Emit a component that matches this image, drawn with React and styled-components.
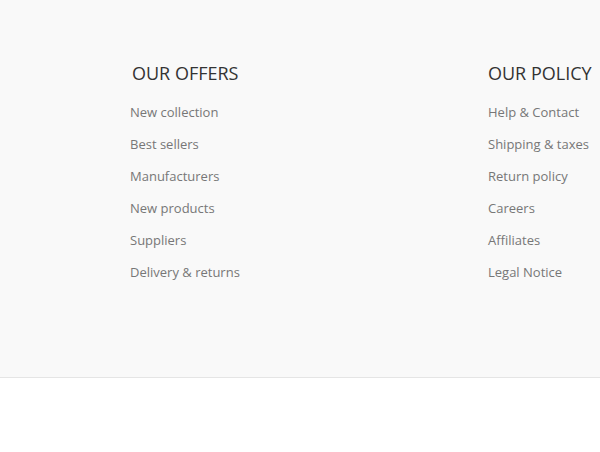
import React from "react";
import styled, { createGlobalStyle } from "styled-components";

const GlobalStyle = createGlobalStyle`
  html, body {
    margin: 0;
    padding: 0;
    background: #ffffff;
    font-family: "Open Sans", "Liberation Sans", sans-serif;
  }
`;

const Footer = styled.footer`
  background: #f9f9f9;
  border-bottom: 1px solid #e5e5e5;
  padding: 63px 0 89px 130px;
  overflow: hidden;
`;

const Columns = styled.div`
  display: flex;
  white-space: nowrap;
`;

const Column = styled.div`
  flex: 0 0 358px;
`;

const Title = styled.h4`
  margin: 0 0 13px ${(p) => p.$indent || 0}px;
  font-size: 18px;
  line-height: 20px;
  font-weight: 400;
  color: #333333;
  text-transform: uppercase;
`;

const LinkList = styled.ul`
  list-style: none;
  margin: 0;
  padding: 0;
`;

const LinkItem = styled.li`
  font-size: 13px;
  line-height: 32px;
  color: #777777;
  cursor: pointer;
  &:hover {
    color: #333333;
  }
`;

const sections = [
  {
    title: "Our offers",
    indent: 2,
    links: [
      "New collection",
      "Best sellers",
      "Manufacturers",
      "New products",
      "Suppliers",
      "Delivery & returns",
    ],
  },
  {
    title: "Our policy",
    indent: 0,
    links: [
      "Help & Contact",
      "Shipping & taxes",
      "Return policy",
      "Careers",
      "Affiliates",
      "Legal Notice",
    ],
  },
];

export default function App() {
  return (
    <>
      <GlobalStyle />
      <Footer>
        <Columns>
          {sections.map((s) => (
            <Column key={s.title}>
              <Title $indent={s.indent}>{s.title}</Title>
              <LinkList>
                {s.links.map((l) => (
                  <LinkItem key={l}>{l}</LinkItem>
                ))}
              </LinkList>
            </Column>
          ))}
        </Columns>
      </Footer>
    </>
  );
}
